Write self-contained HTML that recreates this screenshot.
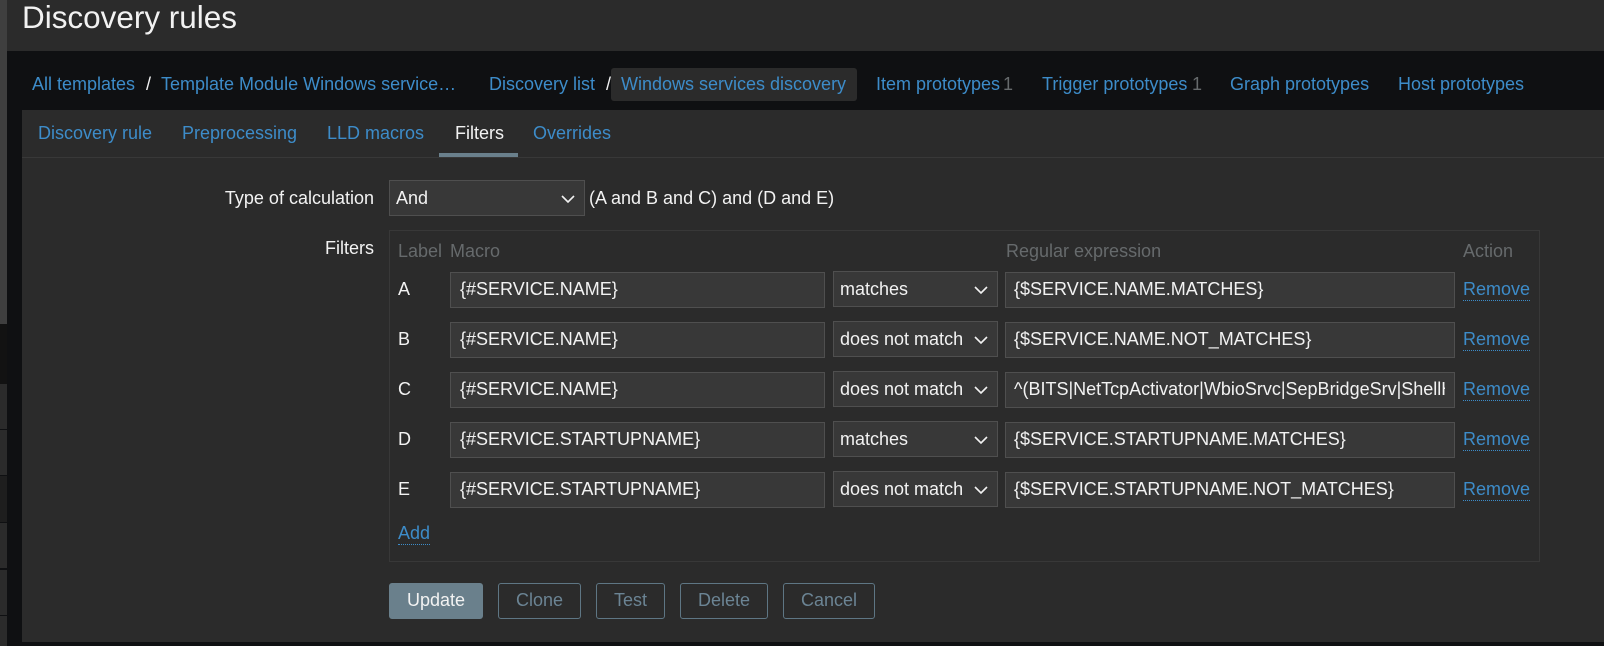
<!DOCTYPE html>
<html><head><meta charset="utf-8"><title>Discovery rules</title>
<style>
html,body{margin:0;padding:0;background:#0f1012;}
body{width:1604px;height:646px;position:relative;overflow:hidden;font-family:"Liberation Sans",Arial,sans-serif;font-size:18px;line-height:20px;color:#f2f2f2;}
.b{position:absolute;box-sizing:border-box;}
.t{position:absolute;white-space:nowrap;}
.l{color:#3d8cc9;}
.m{color:#666a6c;}
.u{border-bottom:1px dotted #3d8cc9;height:21px;}
.i{position:absolute;box-sizing:border-box;background:#383838;border:1px solid #4f4f4f;height:36px;overflow:hidden;white-space:nowrap;padding:6px 9px 0;}
.r{padding-left:8px;}
.s{position:absolute;box-sizing:border-box;background:#383838;border:1px solid #4f4f4f;height:36px;white-space:nowrap;padding:7px 6px 0;}
.s svg{position:absolute;right:8px;top:13px;}
.btn{position:absolute;box-sizing:border-box;top:583px;height:36px;border:1px solid #5e7684;border-radius:3px;text-align:center;color:#6b8494;padding-top:6px;}
</style></head><body>
<div class="b" style="left:0;top:0;width:7px;height:324px;background:#3f3f3f"></div>
<div class="b" style="left:0;top:324px;width:7px;height:60px;background:#121212"></div>
<div class="b" style="left:0;top:384px;width:7px;height:45px;background:#2b2b2b"></div>
<div class="b" style="left:0;top:430px;width:7px;height:45px;background:#2b2b2b"></div>
<div class="b" style="left:0;top:476px;width:7px;height:46px;background:#1e1e1e"></div>
<div class="b" style="left:0;top:523px;width:7px;height:45px;background:#2b2b2b"></div>
<div class="b" style="left:0;top:570px;width:7px;height:45px;background:#2b2b2b"></div>
<div class="b" style="left:0;top:616px;width:7px;height:30px;background:#2b2b2b"></div>

<div class="b" style="left:7px;top:0;width:1597px;height:51px;background:#2b2b2b"></div>
<div class="t" style="left:22px;top:0;font-size:31.46px;line-height:36px;">Discovery rules</div>

<div class="t l" style="left:32px;top:74px">All templates</div>
<div class="t" style="left:146px;top:74px">/</div>
<div class="t l" style="left:161px;top:74px">Template Module Windows service…</div>
<div class="t l" style="left:489px;top:74px">Discovery list</div>
<div class="t" style="left:606px;top:74px">/</div>
<div class="b" style="left:611px;top:68px;width:246px;height:33px;background:#2b2b2b;border-radius:3px"></div>
<div class="t l" style="left:621px;top:74px">Windows services discovery</div>
<div class="t l" style="left:876px;top:74px">Item prototypes</div>
<div class="t m" style="left:1003px;top:74px">1</div>
<div class="t l" style="left:1042px;top:74px">Trigger prototypes</div>
<div class="t m" style="left:1192px;top:74px">1</div>
<div class="t l" style="left:1230px;top:74px">Graph prototypes</div>
<div class="t l" style="left:1398px;top:74px">Host prototypes</div>

<div class="b" style="left:22px;top:110px;width:1582px;height:532px;background:#2b2b2b"></div>
<div class="b" style="left:22px;top:157px;width:1582px;height:1px;background:#383838"></div>
<div class="t l" style="left:38px;top:123px">Discovery rule</div>
<div class="t l" style="left:182px;top:123px">Preprocessing</div>
<div class="t l" style="left:327px;top:123px">LLD macros</div>
<div class="t" style="left:455px;top:123px">Filters</div>
<div class="t l" style="left:533px;top:123px">Overrides</div>
<div class="b" style="left:439px;top:153px;width:79px;height:4px;background:#6a808c"></div>

<div class="t" style="right:1230px;top:188px">Type of calculation</div>
<div class="s" style="left:389px;top:180px;width:196px;">And<svg width="16" height="10" viewBox="0 0 16 10"><path d="M2 2l6 6 6-6" fill="none" stroke="#f2f2f2" stroke-width="1.6"/></svg></div>
<div class="t" style="left:589px;top:188px">(A and B and C) and (D and E)</div>

<div class="t" style="right:1230px;top:238px">Filters</div>
<div class="b" style="left:389px;top:230px;width:1151px;height:332px;border:1px solid #383838"></div>
<div class="t m" style="left:398px;top:241px">Label</div>
<div class="t m" style="left:450px;top:241px">Macro</div>
<div class="t m" style="left:1006px;top:241px">Regular expression</div>
<div class="t m" style="left:1463px;top:241px">Action</div>

<div class="t" style="left:398px;top:279px">A</div>
<div class="i" style="left:450px;top:272px;width:375px">{#SERVICE.NAME}</div>
<div class="s" style="left:833px;top:271px;width:165px">matches<svg width="16" height="10" viewBox="0 0 16 10"><path d="M2 2l6 6 6-6" fill="none" stroke="#f2f2f2" stroke-width="1.6"/></svg></div>
<div class="i r" style="left:1005px;top:272px;width:450px">{$SERVICE.NAME.MATCHES}</div>
<div class="t l u" style="left:1463px;top:279px">Remove</div>

<div class="t" style="left:398px;top:329px">B</div>
<div class="i" style="left:450px;top:322px;width:375px">{#SERVICE.NAME}</div>
<div class="s" style="left:833px;top:321px;width:165px">does not match<svg width="16" height="10" viewBox="0 0 16 10"><path d="M2 2l6 6 6-6" fill="none" stroke="#f2f2f2" stroke-width="1.6"/></svg></div>
<div class="i r" style="left:1005px;top:322px;width:450px">{$SERVICE.NAME.NOT_MATCHES}</div>
<div class="t l u" style="left:1463px;top:329px">Remove</div>

<div class="t" style="left:398px;top:379px">C</div>
<div class="i" style="left:450px;top:372px;width:375px">{#SERVICE.NAME}</div>
<div class="s" style="left:833px;top:371px;width:165px">does not match<svg width="16" height="10" viewBox="0 0 16 10"><path d="M2 2l6 6 6-6" fill="none" stroke="#f2f2f2" stroke-width="1.6"/></svg></div>
<div class="i r" style="left:1005px;top:372px;width:450px"><div style="overflow:hidden;width:431px">^(BITS|NetTcpActivator|WbioSrvc|SepBridgeSrv|ShellHWDetection)$</div></div>
<div class="t l u" style="left:1463px;top:379px">Remove</div>

<div class="t" style="left:398px;top:429px">D</div>
<div class="i" style="left:450px;top:422px;width:375px">{#SERVICE.STARTUPNAME}</div>
<div class="s" style="left:833px;top:421px;width:165px">matches<svg width="16" height="10" viewBox="0 0 16 10"><path d="M2 2l6 6 6-6" fill="none" stroke="#f2f2f2" stroke-width="1.6"/></svg></div>
<div class="i r" style="left:1005px;top:422px;width:450px">{$SERVICE.STARTUPNAME.MATCHES}</div>
<div class="t l u" style="left:1463px;top:429px">Remove</div>

<div class="t" style="left:398px;top:479px">E</div>
<div class="i" style="left:450px;top:472px;width:375px">{#SERVICE.STARTUPNAME}</div>
<div class="s" style="left:833px;top:471px;width:165px">does not match<svg width="16" height="10" viewBox="0 0 16 10"><path d="M2 2l6 6 6-6" fill="none" stroke="#f2f2f2" stroke-width="1.6"/></svg></div>
<div class="i r" style="left:1005px;top:472px;width:450px">{$SERVICE.STARTUPNAME.NOT_MATCHES}</div>
<div class="t l u" style="left:1463px;top:479px">Remove</div>

<div class="t l u" style="left:398px;top:523px">Add</div>

<div class="btn" style="left:389px;width:94px;background:#6a808c;border-color:#6a808c;color:#f2f2f2">Update</div>
<div class="btn" style="left:498px;width:83px">Clone</div>
<div class="btn" style="left:596px;width:69px">Test</div>
<div class="btn" style="left:680px;width:88px">Delete</div>
<div class="btn" style="left:783px;width:92px">Cancel</div>
</body></html>
